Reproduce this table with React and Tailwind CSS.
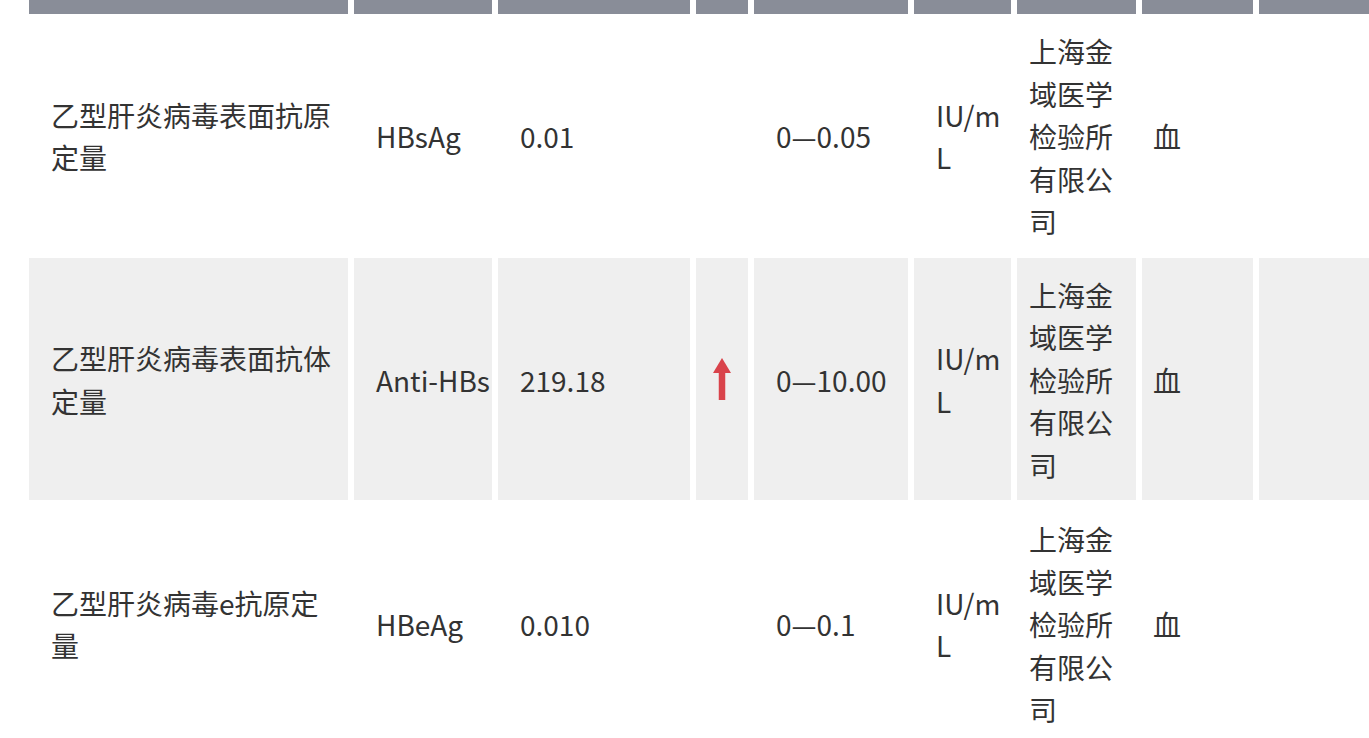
import React from "react";

const ROWS = [
  {
    name: "乙型肝炎病毒表面抗原定量",
    code: "HBsAg",
    value: "0.01",
    flag: false,
    range: "0—0.05",
    unit: "IU/mL",
    lab: "上海金域医学检验所有限公司",
    sample: "血",
    pad: "pt-[10px] pb-[9px]",
  },
  {
    name: "乙型肝炎病毒表面抗体定量",
    code: "Anti-HBs",
    value: "219.18",
    flag: true,
    range: "0—10.00",
    unit: "IU/mL",
    lab: "上海金域医学检验所有限公司",
    sample: "血",
    pad: "pt-[16px] pb-[14px]",
  },
  {
    name: "乙型肝炎病毒e抗原定量",
    code: "HBeAg",
    value: "0.010",
    flag: false,
    range: "0—0.1",
    unit: "IU/mL",
    lab: "上海金域医学检验所有限公司",
    sample: "血",
    pad: "pt-[12px] pb-[12px]",
  },
];

const WIDTHS = [319, 138, 192, 52, 154, 97, 119, 111, 200];

const UpArrow = () => (
  <svg width="18" height="42" viewBox="0 0 18 42" className="mx-auto block">
    <polygon points="0,15 9,0 18,15" fill="#d9434b" />
    <rect x="5.75" y="14" width="6.5" height="28" fill="#d9434b" />
  </svg>
);

const App = () => {
  return (
    <div
      className="h-screen w-full overflow-hidden bg-white text-[#333] text-[28px] leading-[42.5px]"
      style={{ fontFamily: '"Noto Sans CJK SC", "Noto Sans", sans-serif' }}
    >
      <table className="table-fixed border-separate border-spacing-[6px] ml-[23px] mt-[-20px] w-[1442px]">
        <colgroup>
          {WIDTHS.map((w, i) => (
            <col key={i} style={{ width: w }} />
          ))}
        </colgroup>
        <thead>
          <tr>
            {WIDTHS.map((w, i) => (
              <th key={i} className="h-[28px] bg-[#898d98] p-0"></th>
            ))}
          </tr>
        </thead>
        <tbody>
          {ROWS.map((r, i) => {
            const bg = i % 2 === 1 ? "bg-[#efefef]" : "bg-white";
            const td = `${bg} ${r.pad} align-middle pr-0 font-normal`;
            return (
              <tr key={i}>
                <td className={`${bg} ${r.pad} align-middle pl-[22px] pr-[12px]`}>{r.name}</td>
                <td className={`${td} pl-[22px] whitespace-nowrap`}>{r.code}</td>
                <td className={`${td} pl-[22px]`}>{r.value}</td>
                <td className={`${bg} align-middle p-0`}>
                  {r.flag && <UpArrow />}
                </td>
                <td className={`${td} pl-[22px]`}>{r.range}</td>
                <td className={`${td} pl-[22px] break-all`}>{r.unit}</td>
                <td className={`${td} pl-[12px]`}>{r.lab}</td>
                <td className={`${td} pl-[11px]`}>{r.sample}</td>
                <td className={`${td} pl-[12px]`}></td>
              </tr>
            );
          })}
        </tbody>
      </table>
    </div>
  );
};

export default App;
